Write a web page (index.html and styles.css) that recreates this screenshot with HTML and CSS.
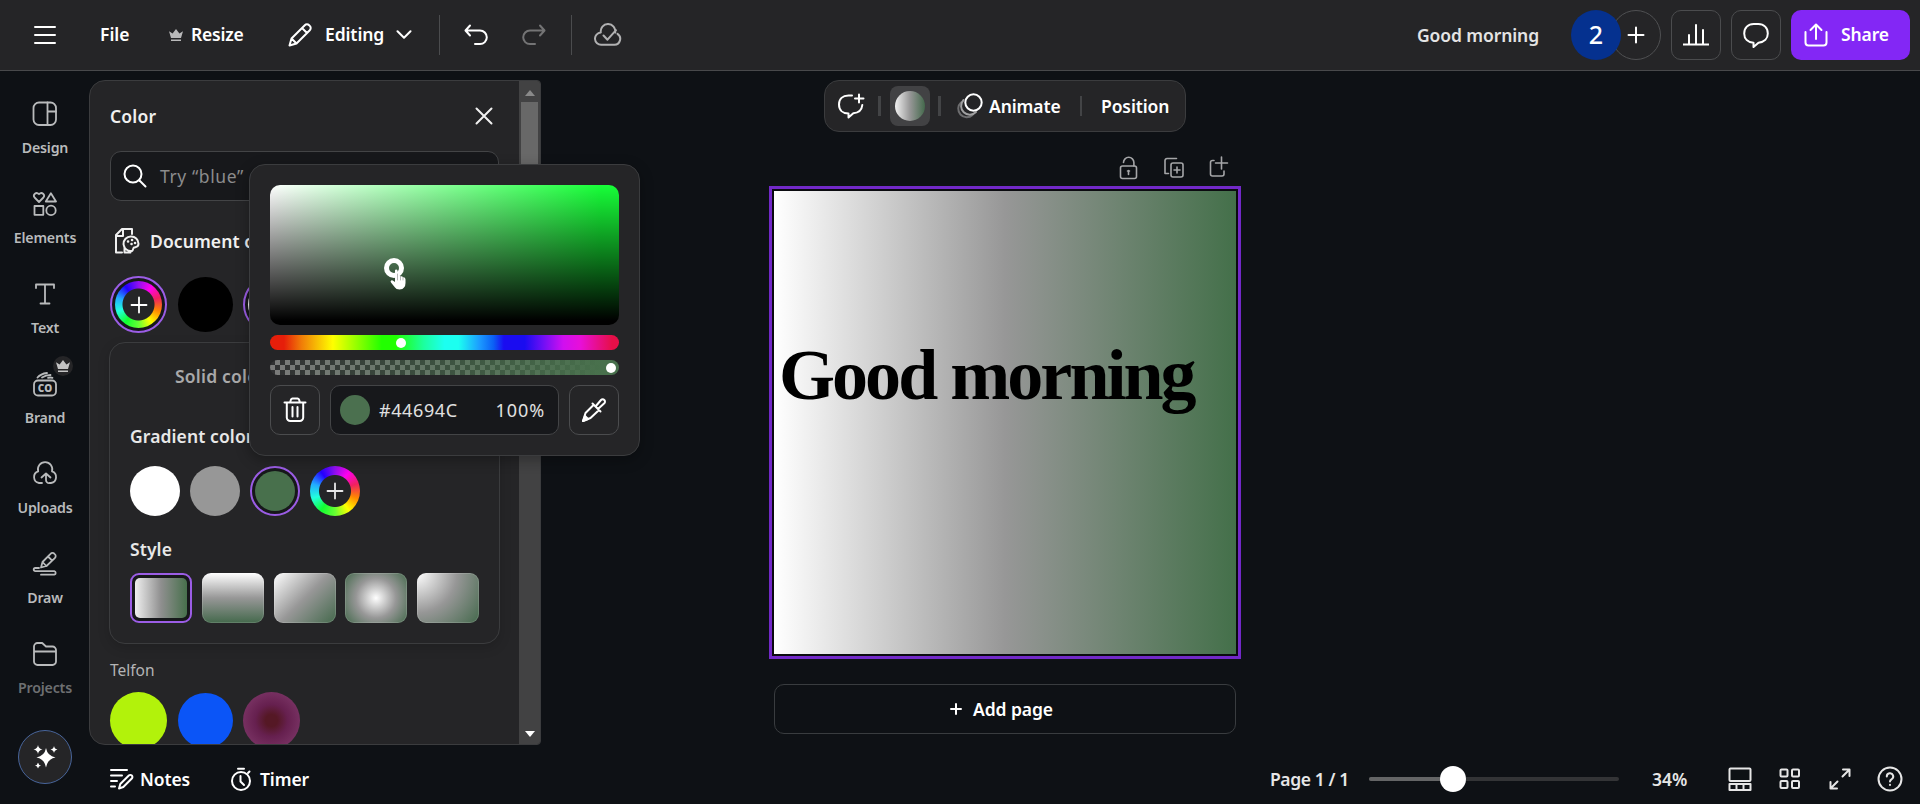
FILE: index.html
```
<!DOCTYPE html>
<html lang="en">
<head>
    <meta charset="UTF-8" />
    <meta name="viewport" content="width=device-width, initial-scale=1.0"/>
    <title>Good morning - Editor</title>
    <link rel="stylesheet" href="styles.css">
</head>
<body>

<!-- Header -->
<header class="topbar">
    <svg class="i-menu" width="22" height="20" viewBox="0 0 22 20"><path d="M1 2h20M1 10h20M1 18h20"/></svg>
    <span class="m-file">File</span>
    <svg class="i-crown" width="16" height="14" viewBox="0 0 16 14"><path d="M3 10 1 3.2l3.600 2.300L8 1l3.400 4.500L15 3.200 13 10zM3 11.500h10V13H3z"/></svg>
    <span class="m-resize">Resize</span>
    <svg class="i-pencil" width="24" height="24" viewBox="0 0 24 24"><path d="M1.500 22.500 3.500 15.500 16.800 2.200a3 3 0 0 1 4.300 0l.700.700a3 3 0 0 1 0 4.300L8.500 20.500zM14 5l5 5M3.500 15.500l5 5"/></svg>
    <span class="m-editing">Editing</span>
    <svg class="i-chevron" width="16" height="9" viewBox="0 0 16 9"><path d="M1.500 1.200 8 7.700l6.500-6.500"/></svg>
    <i class="bar"></i>
    <svg class="i-undo" width="24" height="22" viewBox="0 0 24 22"><path d="M6 1.500 1.500 6.500 6 11.500M2 6.500h14a6.800 6.800 0 0 1 0 13.600h-5"/></svg>
    <svg class="i-redo" width="24" height="22" viewBox="0 0 24 22"><path d="m18 1.500 4.500 5-4.500 5M22 6.500H8a6.800 6.800 0 0 0 0 13.600h5"/></svg>
    <i class="bar"></i>
    <svg class="i-cloud" width="28" height="24" viewBox="0 0 28 24"><path d="M21.200 9.500a7.300 7.300 0 1 0-14.400 0A6 6 0 0 0 7.500 21.800h13a6 6 0 0 0 3-11M9.500 12.500l4 4.200 8.500-9.500"/></svg>

    <div class="topbar-right">
        <span class="doc-name">Good morning</span>
        <span class="avatar">2</span>
        <span class="add-member"><svg width="18" height="18" viewBox="0 0 18 18"><path d="M9 1.500v15M1.500 9h15"/></svg></span>
        <span class="sq-btn"><svg width="26" height="24" viewBox="0 0 26 24"><path d="M0.500 21.500h25M6 21V12M13 21V2M20 21V7"/></svg></span>
        <span class="sq-btn"><svg width="26" height="26" viewBox="0 0 26 26"><path d="M15.500 20.700 10.500 25v-4.200C5 20.500 1.200 17 1.200 11.500c0-5.700 3.800-9.500 9.500-9.500h4.600c5.700 0 9.500 3.800 9.500 9.500 0 5-3.500 8.600-9.300 9.200z"/></svg></span>
        <span class="share"><svg width="24" height="24" viewBox="0 0 24 24"><path d="M12 16V2M6.500 7 12 1.500 17.500 7M1.500 9v10.500a3 3 0 0 0 3 3h15a3 3 0 0 0 3-3V9"/></svg><span>Share</span></span>
    </div>
</header>

<div class="workspace">
    <!-- Side rail -->
    <nav class="rail">
        <a class="rail-item">
            <svg width="26" height="26" viewBox="0 0 26 26"><rect x="1.500" y="1.500" width="22.500" height="22.500" rx="5.500"/><path d="M15.500 1.500V24M15.500 10.500H24"/></svg>
            <span>Design</span>
        </a>
        <a class="rail-item">
            <svg width="26" height="26" viewBox="0 0 26 26"><path d="M7 11 2.600 6.500C.5 4 4 .2 7 3.200c3-3 6.500.800 4.400 3.300zM18.900 2.200 24 10.500H13.800z"/><rect x="2.500" y="15" width="8.800" height="8.800"/><circle cx="19" cy="19.400" r="4.700"/></svg>
            <span>Elements</span>
        </a>
        <a class="rail-item">
            <svg width="26" height="26" viewBox="0 0 26 26"><path d="M4 7V3.500h18V7M13 3.500v19M8.500 22.500h9"/></svg>
            <span>Text</span>
        </a>
        <a class="rail-item">
            <svg width="26" height="26" viewBox="0 0 26 26"><rect x="2" y="9.500" width="22" height="15" rx="4"/><path d="M5.500 6.500C8 3.500 11 2.500 15 2M10 6.500c3-2 5.500-2.500 8.500-2.500M16 6.800c2-.500 3-.500 4.500 0"/></svg>
            <b class="co">CO</b>
            <i class="badge"><svg width="16" height="14" viewBox="0 0 16 14"><path d="M3 10 1 3.200l3.600 2.300L8 1l3.400 4.500L15 3.200 13 10zM3 11.500h10V13H3z"/></svg></i>
            <span>Brand</span>
        </a>
        <a class="rail-item">
            <svg width="26" height="26" viewBox="0 0 26 26"><path d="M10 22H7a6 6 0 0 1-.8-11.600 7.200 7.200 0 1 1 13.800 0A6 6 0 0 1 19 22h-1.500a3 3 0 0 1-3.500-3v-6M9.500 16.500 14 12.500l4.500 4"/></svg>
            <span>Uploads</span>
        </a>
        <a class="rail-item">
            <svg width="26" height="26" viewBox="0 0 26 26"><path d="m9 16.500 1.500-5.500 8-8.200a2.700 2.700 0 0 1 4 0l.300.300a2.700 2.700 0 0 1 0 4L14.500 15zM16 5.500l4.200 4.200M10.500 11l3.800 4M7 17H3.300a1.500 1.500 0 0 0 0 3.200h19a1.800 1.800 0 0 1 0 3.500H9"/></svg>
            <span>Draw</span>
        </a>
        <a class="rail-item">
            <svg width="26" height="26" viewBox="0 0 26 26"><path d="M2 10V5.500A3.500 3.500 0 0 1 5.500 2h4.700L14 5.500h6.500A3.500 3.500 0 0 1 24 9v11.500a3.500 3.500 0 0 1-3.500 3.500h-15A3.500 3.500 0 0 1 2 20.500zM2 10.500h22"/></svg>
            <span class="faded">Projects</span>
        </a>
        <div class="magic"><svg width="26" height="26" viewBox="0 0 26 26"><path d="M14 4q1.500 8 9.500 9.500Q15.500 15 14 23.500 12.500 15 4.500 13.500 12.500 12 14 4zM6 1q.600 3.900 4.500 4.500Q6.600 6.100 6 10 5.400 6.100 1.500 5.500 5.400 4.900 6 1zM22 2q.500 3 3.500 3.500-3 .500-3.500 3.500-.500-3-3.500-3.500 3-.500 3.500-3.500zM6 18.500q.500 2.600 3 3-2.500.500-3 3-.500-2.500-3-3 2.500-.400 3-3z"/></svg></div>
    </nav>

    <!-- Color panel -->
    <aside class="panel">
        <div class="panel-body">
            <div class="panel-head">
                <span>Color</span>
                <svg width="18" height="18" viewBox="0 0 18 18"><path d="m1.500 1.500 15 15M16.500 1.500l-15 15"/></svg>
            </div>
            <div class="search">
                <svg width="24" height="24" viewBox="0 0 24 24"><circle cx="10" cy="10" r="8.500"/><path d="m16.500 16.500 6 6"/></svg>
                <span>Try “blue” or “#00c4cc”</span>
            </div>
            <div class="doc-colors">
                <svg width="26" height="28" viewBox="0 0 26 28"><path d="M8 25.500H2V8l6-6h10v5M9 2v7H2.500"/><path d="M17 9.500a7.300 7.300 0 1 0 1 14.500c1.500-.500.500-2.500 2-3.500 1.500-.700 4.500 0 4.500-3.800A7.300 7.300 0 0 0 17 9.500zM10.500 20v5.500h6"/><path class="dots" d="M14 14.500h.1M18 13h.1M21 16h.1M17.500 17h.1"/></svg>
                <span>Document colors</span>
            </div>
            <div class="swatches">
                <i class="swatch ring"><i class="wheel"><svg width="18" height="18" viewBox="0 0 18 18"><path d="M9 1.500v15M1.500 9h15"/></svg></i></i>
                <i class="swatch small black"></i>
                <i class="swatch ring"><i class="dot-grad"></i></i>
            </div>
            <div class="card">
                <div class="tabs">Solid color</div>
                <div class="label gradient-label">Gradient colors</div>
                <div class="stops">
                    <i class="stop white"></i>
                    <i class="stop gray"></i>
                    <i class="stop ring"><i class="green"></i></i>
                    <i class="stop wheel"><svg width="18" height="18" viewBox="0 0 18 18"><path d="M9 1.500v15M1.500 9h15"/></svg></i>
                </div>
                <div class="label style-label">Style</div>
                <div class="styles">
                    <i class="tile selected"><i class="g-right"></i></i>
                    <i class="tile g-down"></i>
                    <i class="tile g-diag"></i>
                    <i class="tile g-radial"></i>
                    <i class="tile g-corner"></i>
                </div>
            </div>
            <div class="telfon">Telfon</div>
            <div class="swatches brand-swatches">
                <i class="swatch lime"></i>
                <i class="swatch small blue"></i>
                <i class="swatch plum"></i>
            </div>
        </div>
        <div class="scrollbar">
            <svg width="10" height="6" viewBox="0 0 10 6"><path d="M0 6 5 0l5 6z"/></svg>
            <i class="thumb"></i>
            <svg class="down" width="10" height="6" viewBox="0 0 10 6"><path d="M0 0l5 6 5-6z"/></svg>
        </div>
    </aside>

    <!-- Canvas -->
    <main class="stage">
        <div class="toolbar">
            <svg class="t-comment" width="28" height="26" viewBox="0 0 28 26"><path d="M15 2.500h-3.500C5.500 2.500 2 6 2 11.500s3.500 9 9.500 9V24.500l4.800-4.200c5.400-.400 8.500-3.500 9-8.300M22 1.500v8M18 5.500h8.500"/></svg>
            <i class="sep"></i>
            <span class="fill-btn"><i></i></span>
            <i class="sep"></i>
            <svg class="t-animate" width="26" height="26" viewBox="0 0 26 26"><path class="far" d="M4 9.500a8 8 0 1 0 11.500 12.500"/><path class="mid" d="M6.500 7a8.200 8.200 0 1 0 12.500 12"/><circle cx="16.500" cy="9.500" r="8.200"/></svg>
            <span class="t-label animate">Animate</span>
            <i class="sep thin"></i>
            <span class="t-label position">Position</span>
        </div>
        <div class="page-tools">
            <svg width="20" height="24" viewBox="0 0 20 24"><rect x="1.500" y="10" width="16" height="12.500" rx="2"/><path d="M4.500 6.500a5.200 5.200 0 0 1 10.400 0V10M9.500 14.500V18.500M8.500 15h2"/></svg>
            <svg width="20" height="24" viewBox="0 0 20 24"><path d="M4.500 17.500H1V4.500a2 2 0 0 1 2-2h9.500"/><rect x="7" y="7" width="12" height="14" rx="2"/><path d="M13 11v6M10 14h6"/></svg>
            <svg width="20" height="24" viewBox="0 0 20 24"><path d="M5 4.500H3.500a2 2 0 0 0-2 2V18a2 2 0 0 0 2 2H13a2 2 0 0 0 2-2v-3M12.500 1v12M6.500 7h12"/></svg>
        </div>
        <div class="frame"><div class="page"><span>Good morning</span></div></div>
        <div class="add-page"><svg width="12" height="12" viewBox="0 0 12 12"><path d="M6 1v10M1 6h10"/></svg><span>Add page</span></div>
    </main>
</div>

<!-- Footer -->
<footer class="bottombar">
    <svg class="b-notes" width="24" height="22" viewBox="0 0 24 22"><path d="M1 2h16M1 7.500h11M1 13h6M1 18.500h4M9 20.500l1.300-4.500 8.500-8.500a2 2 0 0 1 3 3L13.300 19z"/></svg>
    <span class="b-label notes">Notes</span>
    <svg class="b-timer" width="22" height="24" viewBox="0 0 22 24"><circle cx="11" cy="14" r="9"/><path d="M8 1.800h6M18 6l1.500-1.500M10.500 9v5.500l3.500 3.500"/></svg>
    <span class="b-label timer">Timer</span>
    <div class="bottom-right">
        <span class="pages">Page 1 / 1</span>
        <div class="slider"><i class="filled"></i><i class="knob"></i></div>
        <span class="zoom">34%</span>
        <svg width="24" height="24" viewBox="0 0 24 24"><rect x="1.500" y="1.500" width="21" height="12.500" rx="1"/><path d="M1.500 17h21v6h-21zM8.500 17v6M15.500 17v6"/></svg>
        <svg width="24" height="24" viewBox="0 0 24 24"><rect x="2.500" y="2.500" width="7" height="7" rx="1"/><rect x="14" y="2.500" width="7" height="7" rx="1"/><rect x="2.500" y="14" width="7" height="7" rx="1"/><rect x="14" y="14" width="7" height="7" rx="1"/></svg>
        <svg width="24" height="24" viewBox="0 0 24 24"><path d="M15 2.500h6.500V9M21.500 2.500 14.500 9.500M2.500 15v6.500H9M2.500 21.500l7-7"/></svg>
        <svg class="help" width="26" height="26" viewBox="0 0 26 26"><circle cx="13" cy="13" r="11.500"/><path d="M9.800 10.500a3.200 3.200 0 1 1 4.700 2.800c-1 .600-1.500 1-1.500 2.200M13 18.700v.3"/></svg>
    </div>
</footer>

<!-- Color picker popup -->
<div class="picker">
    <div class="sv">
        <i class="sv-handle"></i>
        <svg class="hand" width="17" height="21" viewBox="0 0 17 21"><path d="M5 1.500Q5 .5 6.200.5t1.300 1V7q2-.8 3 .5 1.700-.5 2.500.7 2.500-.2 2.500 2.300V14q0 3-1.500 4.500-1 2-4.500 2t-4.500-2L1 13.500q-1-1.500.2-2T3.500 12l1.500 1z"/><path class="fingers" d="M7.500 5v6M10.500 7.500v3.500M13 8.500V11"/></svg>
    </div>
    <div class="hue"><i></i></div>
    <div class="alpha"><i></i></div>
    <div class="picker-row">
        <span class="sq-btn"><svg width="24" height="26" viewBox="0 0 24 26"><path d="M1.500 5.500h21M7 5.500l1-3a2 2 0 0 1 1.500-1h5a2 2 0 0 1 1.500 1l1 3M3.800 5.500v15a3.500 3.500 0 0 0 3.500 3.500h9.400a3.500 3.500 0 0 0 3.500-3.500v-15M9.500 10v9.500M14.500 10v9.500"/></svg></span>
        <div class="hex"><i></i><span class="code">#44694C</span><span class="pct">100%</span></div>
        <span class="sq-btn"><svg width="26" height="26" viewBox="0 0 26 26"><path d="M12 8.500 4.500 16 2 24l7.500-3 8-7.500M11.500 6.500l8 8M14.500 9.500l5.500-6.500a2.200 2.200 0 0 1 3.300 3.300L17 12"/><path class="solid" d="M4 19 2 24l5-2z"/></svg></span>
    </div>
</div>

</body>
</html>
```
FILE: styles.css
```
* {
    box-sizing: border-box;
}

body {
    font-family: "Noto Sans", "Open Sans", sans-serif;
    font-size: 17.5px;
    font-weight: 600;
    background: #0e1115;
    color: #fff;
    margin: 0;
    height: 804px;
    overflow: hidden;
    display: flex;
    flex-direction: column;
    white-space: nowrap;
}

i {
    display: block;
    flex: none;
    font-style: normal;
}

svg {
    display: block;
    flex: none;
    fill: none;
    stroke: currentColor;
    stroke-width: 2;
    stroke-linecap: round;
    stroke-linejoin: round;
}

/* top bar */
.topbar {
    height: 71px;
    flex: none;
    display: flex;
    align-items: center;
    padding: 0 10px 1px 34px;
    background: #252527;
    border-bottom: 1px solid #48494b;
}

.topbar > span, .share span, .add-page span, .t-label, .b-label, .pages, .zoom, .hex span { padding-bottom: 1px; }

.m-file { width: 30px; margin-left: 44px; }
.i-crown { margin-left: 38px; fill: #b9b9ba; stroke: none; }
.m-resize { width: 54px; margin-left: 7px; letter-spacing: -0.2px; }
.i-pencil { margin-left: 43px; }
.m-editing { width: 60px; margin-left: 13px; letter-spacing: -0.1px; }
.i-chevron { margin-left: 11px; }
.bar { width: 1px; height: 40px; background: #4b4c4e; }
.i-chevron + .bar { margin-left: 27px; }
.i-undo { margin-left: 24px; }
.i-redo { margin-left: 34px; color: #747475; }
.i-redo + .bar { margin-left: 25px; }
.i-cloud { margin-left: 22px; color: #b1b1b2; }

.topbar-right {
    margin-left: auto;
    display: flex;
    align-items: center;
}

.doc-name { width: 122px; margin-right: 32px; color: #e4e4e4; letter-spacing: -0.1px; }

.avatar {
    width: 50px;
    height: 50px;
    border-radius: 50%;
    background: #05318f;
    font-size: 25px;
    line-height: 49px;
    text-align: center;
    font-weight: 500;
    z-index: 1;
}

.add-member {
    width: 50px;
    height: 50px;
    margin: 0 10px 0 -10px;
    border: 1px solid #4f5052;
    border-radius: 50%;
    display: flex;
    align-items: center;
    justify-content: center;
}

.sq-btn {
    width: 50px;
    height: 50px;
    flex: none;
    border: 1px solid #4b4c4e;
    border-radius: 10px;
    display: flex;
    align-items: center;
    justify-content: center;
}

.topbar .sq-btn { margin-right: 10px; }

.share {
    width: 119px;
    height: 50px;
    padding-left: 13px;
    border-radius: 10px;
    background: #8327f5;
    display: flex;
    align-items: center;
    gap: 13px;
    letter-spacing: -0.1px;
}

/* side rail */
.workspace {
    height: 674px;
    flex: none;
    display: flex;
}

.rail {
    width: 90px;
    margin-right: -1px;
    padding-top: 30px;
    display: flex;
    flex-direction: column;
    align-items: center;
    color: #b9bbbc;
}

.rail-item {
    height: 90px;
    flex: none;
    display: flex;
    flex-direction: column;
    align-items: center;
    position: relative;
    font-size: 14.200px;
    letter-spacing: -0.2px;
    gap: 11px;
    line-height: 20px;
}

.rail-item svg { stroke-width: 1.8; }
.faded { color: #6d6f71; }

.co {
    position: absolute;
    top: 9px;
    left: 0;
    right: 0;
    text-align: center;
    font-size: 10px;
    letter-spacing: 0;
    line-height: 16px;
}

.badge {
    position: absolute;
    left: 28px;
    top: -15px;
    width: 20px;
    height: 20px;
    border-radius: 50%;
    background: #252527;
    display: flex;
    align-items: center;
    justify-content: center;
}

.badge svg { fill: #c4c4c4; stroke: none; }

.magic {
    width: 54px;
    height: 54px;
    flex: none;
    margin-top: -1px;
    border-radius: 50%;
    border: 1px solid #48659b;
    background: #252527;
    display: flex;
    align-items: center;
    justify-content: center;
}

.magic svg { fill: #fff; stroke: none; }

/* color panel */
.panel {
    width: 452px;
    height: 665px;
    flex: none;
    margin-top: 9px;
    border: 1px solid #3b3c3e;
    border-radius: 16px 4px 4px 16px;
    background: #252527;
    display: flex;
    overflow: hidden;
}

.panel-body { width: 429px; padding-left: 20px; }

.panel-head {
    width: 383px;
    height: 70px;
    display: flex;
    align-items: center;
    justify-content: space-between;
    color: #f0f0f0;
    letter-spacing: 0.2px;
}

.search {
    width: 389px;
    height: 50px;
    padding-left: 12px;
    border: 1px solid #434446;
    border-radius: 11px;
    background: #17181b;
    display: flex;
    align-items: center;
    gap: 13px;
}

.search span { padding-bottom: 1px; color: #8b8b8c; font-weight: 400; letter-spacing: 0.6px; }

.doc-colors {
    height: 75px;
    padding: 5px 0 0 4px;
    display: flex;
    align-items: center;
    gap: 10px;
    color: #f0f0f0;
    letter-spacing: 0.1px;
}

.doc-colors .dots { stroke-width: 2.500; }

.swatches { display: flex; gap: 10px; align-items: center; }
.swatch { width: 57px; height: 57px; border-radius: 50%; }
.small { width: 55px; height: 55px; margin-left: 1px; }
.ring { border: 2.500px solid #9b5de5; padding: 3px; background: #17181b; }
.ring > i { width: 100%; height: 100%; border-radius: 50%; }
.black { background: #000; }
.dot-grad { background: linear-gradient(90deg, #fff, #979797, #44694c); }

.wheel {
    border-radius: 50%;
    background: radial-gradient(circle, #252527 0 15.500px, transparent 16.500px), conic-gradient(#9010f0, #f0e, #f02060, #f80, #ff0, #6f3, #1f3, #2fd, #2af, #20f, #9010f0);
    display: flex;
    align-items: center;
    justify-content: center;
}

.wheel svg { stroke-width: 1.8; }

.card {
    width: 391px;
    height: 302px;
    margin: 9px 0 0 -1px;
    padding: 0 20px;
    border: 1px solid #3b3c3e;
    border-radius: 16px;
    box-shadow: 0 4px 12px rgba(0, 0, 0, 0.15);
    color: #e8e8e8;
}

.tabs { padding: 21px 0 0 45px; line-height: 24px; color: #a9a9aa; letter-spacing: 0.200px; }
.label { line-height: 24px; letter-spacing: 0.1px; }
.gradient-label { margin-top: 36px; }
.stops { display: flex; gap: 10px; margin-top: 18px; }
.stop { width: 50px; height: 50px; border-radius: 50%; }
.white { background: #fff; }
.gray { background: #979797; }
.green { background: #48704c; }
.style-label { margin-top: 21px; }
.styles { display: flex; gap: 9.750px; margin-top: 12px; }
.tile { width: 62px; height: 50px; border-radius: 9px; }
.tile:not(.selected) { box-shadow: inset 0 0 0 1px rgba(255, 255, 255, 0.15); }
.selected { border: 2.500px solid #9b5de5; padding: 3px; background: #17181b; }
.g-right { height: 100%; border-radius: 5px; background: linear-gradient(90deg, #efefef, #8f8f8f 50%, #48704c); }
.g-down { background: linear-gradient(#fff, #979797 50%, #44694c); }
.g-diag { background: linear-gradient(135deg, #fff, #979797 50%, #44694c); }
.g-radial { background: radial-gradient(circle, #fff, #979797 50%, #44694c); }
.g-corner { background: radial-gradient(circle at 0 0, #fff, #979797 50%, #44694c); }

.telfon { margin-top: 15px; font-size: 15.500px; line-height: 22px; font-weight: 400; color: #b4b4b5; }
.brand-swatches { margin-top: 11px; }
.lime { background: #b2f20b; }
.blue { background: #0b55f7; }
.plum { background: radial-gradient(circle, #551825 15%, #66204f 40%, #863f72); }

.scrollbar {
    width: 21px;
    background: #424243;
    display: flex;
    flex-direction: column;
    align-items: center;
    padding: 9px 0 7px;
}

.scrollbar svg { fill: #8a8a8a; stroke: none; }
.scrollbar .down { margin-top: auto; fill: #fff; }
.thumb { width: 17px; height: 120px; margin-top: 6px; background: #686868; }

/* stage */
.stage {
    width: 472px;
    margin-left: 228px;
    padding-top: 9px;
    display: flex;
    flex-direction: column;
}

.toolbar {
    width: 362px;
    height: 52px;
    flex: none;
    margin-left: 55px;
    padding-left: 12px;
    border: 1px solid #3b3c3e;
    border-radius: 15px;
    background: #252527;
    display: flex;
    align-items: center;
}

.sep { width: 3px; height: 20px; background: #434446; }
.t-comment + .sep { margin-left: 13px; }
.fill-btn { width: 40px; height: 40px; margin: 0 8px 0 9px; padding: 5px; border-radius: 8px; background: #424244; }
.fill-btn i { height: 30px; border-radius: 50%; background: linear-gradient(90deg, #f1f1f1, #979797 50%, #44694c); }
.t-animate { margin-left: 16px; }
.t-animate .far { color: #6d6d6f; }
.t-animate .mid { color: #a0a0a1; }
.animate { width: 72px; margin-left: 6px; letter-spacing: -0.1px; }
.thin { width: 2px; margin-left: 19px; }
.position { margin-left: 19px; letter-spacing: -0.1px; }

.page-tools {
    height: 54px;
    padding: 24px 12px 0 0;
    display: flex;
    justify-content: flex-end;
    gap: 25px;
    color: #a5a6a8;
}

.page-tools svg { stroke-width: 1.600; }

.frame {
    width: 472px;
    height: 473px;
    flex: none;
    border: 3px solid #7229c8;
    padding: 2px;
    background: #0b0b10;
}

.page {
    height: 463px;
    padding: 144px 0 0 5px;
    background: linear-gradient(90deg, #fff, #979797 50%, #44704a);
    color: #000;
    font-family: "Liberation Serif", serif;
    font-weight: 700;
    font-size: 72px;
    line-height: 80px;
    letter-spacing: -2.950px;
}

.add-page {
    width: 462px;
    height: 50px;
    flex: none;
    margin: 25px 0 0 5px;
    padding-right: 7px;
    border: 1px solid #393c3f;
    border-radius: 10px;
    display: flex;
    align-items: center;
    justify-content: center;
    gap: 11px;
    letter-spacing: -0.1px;
}

/* bottom bar */
.bottombar {
    height: 59px;
    flex: none;
    padding: 9px 17px 0 110px;
    display: flex;
    align-items: center;
}

.notes { width: 50px; margin-left: 6px; letter-spacing: -0.1px; }
.b-timer { margin-left: 40px; }
.timer { margin-left: 8px; letter-spacing: -0.1px; }

.bottom-right {
    margin-left: auto;
    display: flex;
    align-items: center;
    gap: 26px;
    color: #e6e6e6;
}

.pages { width: 79px; margin-right: -6px; letter-spacing: -0.4px; }

.slider {
    width: 250px;
    height: 4px;
    border-radius: 2px;
    background: #333436;
    position: relative;
}

.filled { width: 84px; height: 4px; border-radius: 2px; background: #646566; }

.knob {
    position: absolute;
    left: 71px;
    top: -11px;
    width: 26px;
    height: 26px;
    border-radius: 50%;
    background: #fff;
}

.zoom { width: 36px; margin: 0 14px 0 7px; }
.help { margin-left: -1px; }

/* picker popup */
.picker {
    position: absolute;
    left: 249px;
    top: 164px;
    width: 391px;
    height: 292px;
    padding: 20px;
    border: 1px solid #3b3c3e;
    border-radius: 16px;
    background: #252527;
    box-shadow: 0 4px 14px rgba(0, 0, 0, 0.3);
}

.sv {
    height: 140px;
    border-radius: 10px;
    background: linear-gradient(transparent, #000 97%), linear-gradient(90deg, #fff, #17ff38 95%);
    position: relative;
}

.sv-handle {
    position: absolute;
    left: 114px;
    top: 73px;
    width: 20px;
    height: 20px;
    border: 5px solid #fff;
    border-radius: 50%;
}

.hand { position: absolute; left: 120px; top: 84px; fill: #fff; stroke: none; }
.hand .fingers { stroke: #a5a5a5; stroke-width: 0.800; }

.hue, .alpha { height: 15px; margin-top: 10px; border-radius: 8px; position: relative; }
.hue { background: linear-gradient(90deg, #e61e0a 4%, #f07c08 9%, #ff0 18%, #2f0 32% 36%, #1cff9e 44%, #1cfff0 50% 54%, #1c9cff 60%, #0b60f5 64%, #1a0cf0 67% 73%, #6a0ff5 78%, #d00ff0 84%, #e80fd8 89%, #e60f48 98%); }
.alpha { background: linear-gradient(90deg, transparent, #48704c 95%), conic-gradient(#7b7b7b 25%, #303032 0 50%, #7b7b7b 0 75%, #303032 0) 0 0 / 10px 10px; }
.hue i, .alpha i { position: absolute; left: 126px; top: 3px; width: 10px; height: 10px; border-radius: 50%; background: #fff; }
.alpha i { left: 336px; }

.picker-row { display: flex; gap: 10px; margin-top: 10px; }

.hex {
    flex: 1;
    height: 50px;
    padding: 0 14px 0 9px;
    border: 1px solid #434446;
    border-radius: 10px;
    background: #17181b;
    display: flex;
    align-items: center;
    font-size: 18px;
    font-weight: 400;
    color: #e0e0e0;
}

.hex i { width: 30px; height: 30px; margin-right: 9px; border-radius: 50%; background: #4b704f; }
.code { letter-spacing: 0.6px; }
.pct { margin: 0 -1px 0 auto; letter-spacing: 0.9px; }
.solid { fill: #fff; }
```
